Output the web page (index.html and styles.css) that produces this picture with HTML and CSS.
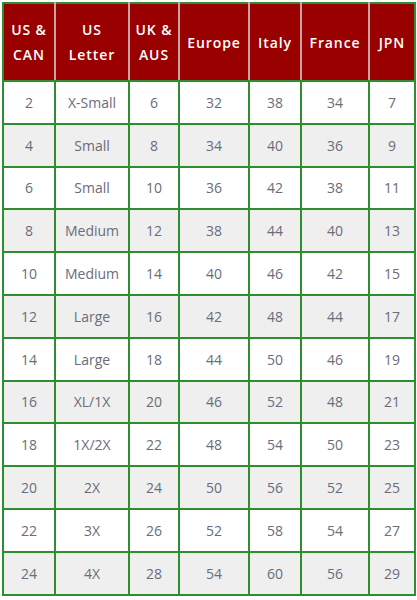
FILE: index.html
```html
<!DOCTYPE html>
<html>
<head>
<meta charset="utf-8">
<link rel="stylesheet" href="styles.css">
</head>
<body>
<div class="wrap">
<table class="sizes">
<colgroup>
<col class="c1"><col class="c2"><col class="c3"><col class="c4"><col class="c5"><col class="c6"><col class="c7">
</colgroup>
<thead>
<tr><th>US &amp;<br>CAN</th><th>US<br>Letter</th><th>UK &amp;<br>AUS</th><th>Europe</th><th>Italy</th><th>France</th><th>JPN</th></tr>
</thead>
<tbody>
<tr><td>2</td><td>X-Small</td><td>6</td><td>32</td><td>38</td><td>34</td><td>7</td></tr>
<tr><td>4</td><td>Small</td><td>8</td><td>34</td><td>40</td><td>36</td><td>9</td></tr>
<tr><td>6</td><td>Small</td><td>10</td><td>36</td><td>42</td><td>38</td><td>11</td></tr>
<tr><td>8</td><td>Medium</td><td>12</td><td>38</td><td>44</td><td>40</td><td>13</td></tr>
<tr><td>10</td><td>Medium</td><td>14</td><td>40</td><td>46</td><td>42</td><td>15</td></tr>
<tr><td>12</td><td>Large</td><td>16</td><td>42</td><td>48</td><td>44</td><td>17</td></tr>
<tr><td>14</td><td>Large</td><td>18</td><td>44</td><td>50</td><td>46</td><td>19</td></tr>
<tr><td>16</td><td>XL/1X</td><td>20</td><td>46</td><td>52</td><td>48</td><td>21</td></tr>
<tr><td>18</td><td>1X/2X</td><td>22</td><td>48</td><td>54</td><td>50</td><td>23</td></tr>
<tr><td>20</td><td>2X</td><td>24</td><td>50</td><td>56</td><td>52</td><td>25</td></tr>
<tr><td>22</td><td>3X</td><td>26</td><td>52</td><td>58</td><td>54</td><td>27</td></tr>
<tr><td>24</td><td>4X</td><td>28</td><td>54</td><td>60</td><td>56</td><td>29</td></tr>
</tbody>
</table>
</div>
</body>
</html>
```
FILE: styles.css
```css
html, body {
  margin: 0;
  padding: 0;
  background: #ffffff;
}
.wrap {
  padding: 2px 3px 0 2px;
}
.sizes {
  border-collapse: collapse;
  table-layout: fixed;
  width: 412px;
  font-family: "Open Sans", "Noto Sans", sans-serif;
  text-align: center;
}
.c1 { width: 52px; }
.c2 { width: 74px; }
.c3 { width: 50px; }
.c4 { width: 70px; }
.c5 { width: 52px; }
.c6 { width: 68px; }
.c7 { width: 46px; }
.sizes th {
  background: #990000;
  color: #ffffff;
  font-weight: 600;
  font-size: 14px;
  letter-spacing: 0.9px;
  line-height: 25px;
  height: 76px;
  padding: 0;
  border: 2px solid #c9a3a3;
  border-top-color: #2f8f2f;
  border-bottom-color: #2f8f2f;
}
.sizes th:first-child { border-left-color: #2f8f2f; }
.sizes th:last-child { border-right-color: #2f8f2f; }
.sizes td {
  color: #6a6c7a;
  font-size: 14px;
  height: 40.8px;
  padding: 0;
  border: 2px solid #2f8f2f;
}
.sizes tbody tr:nth-child(even) td {
  background: #efefef;
}
```
